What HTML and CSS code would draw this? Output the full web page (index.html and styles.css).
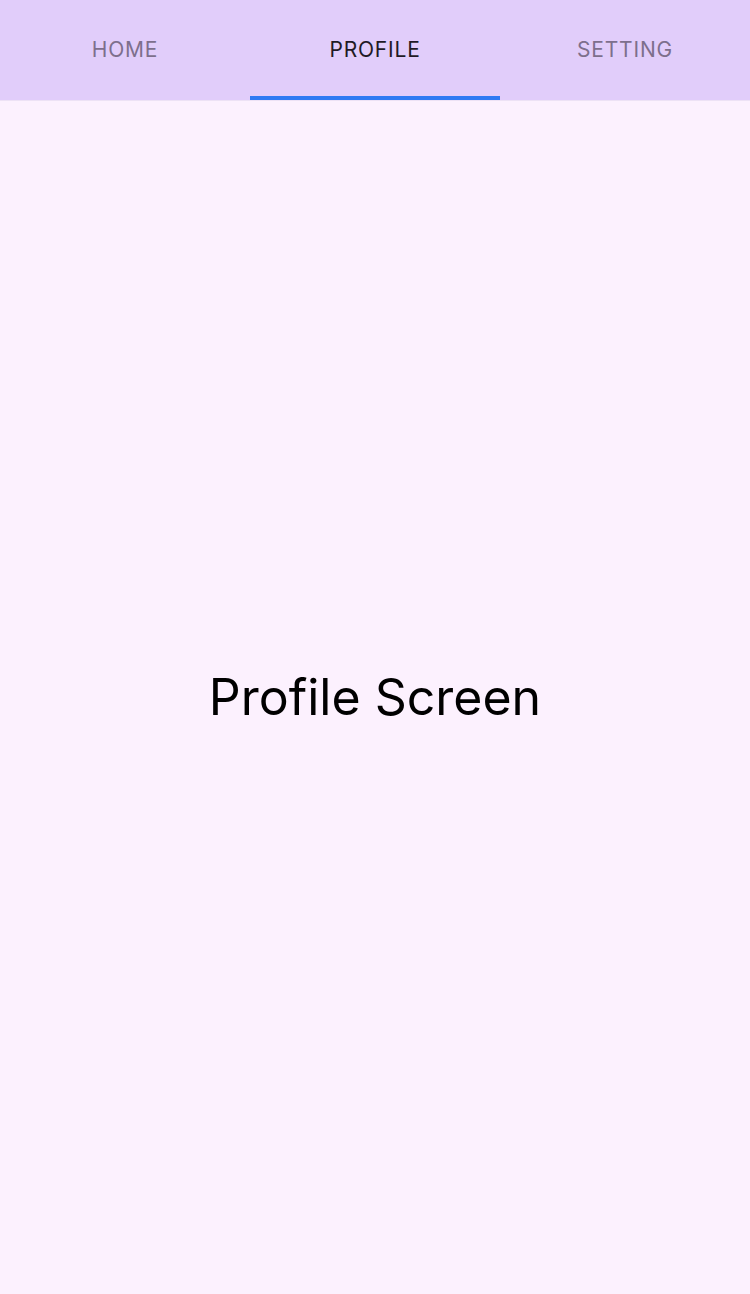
FILE: index.html
```html
<!DOCTYPE html>
<html>
<head>
<meta charset="utf-8">
<link rel="stylesheet" href="styles.css">
</head>
<body>
<div class="app">
  <nav class="tabs">
    <div class="tab">HOME</div>
    <div class="tab active">PROFILE</div>
    <div class="tab">SETTING</div>
  </nav>
  <main class="screen">
    <div class="title">Profile Screen</div>
  </main>
</div>
</body>
</html>
```
FILE: styles.css
```css
html, body {
  margin: 0;
  padding: 0;
  height: 100%;
}
body {
  font-family: Inter, Roboto, "Liberation Sans", sans-serif;
  background: #fcf1fe;
}
.app {
  display: flex;
  flex-direction: column;
  height: 100%;
}
.tabs {
  display: flex;
  height: 100px;
  flex-shrink: 0;
  background: #e1cdfa;
  box-shadow: 0 1px 0 #ede2f5;
  position: relative;
  z-index: 1;
}
.tab {
  flex: 1;
  display: flex;
  align-items: center;
  justify-content: center;
  font-size: 21px;
  letter-spacing: 0.8px;
  color: #7d6f8c;
  box-sizing: border-box;
  padding-bottom: 1px;
}
.tab.active {
  color: #1f1a25;
  border-bottom: 4px solid #2f7af3;
  padding-bottom: 0;
  padding-top: 3px;
}
.screen {
  flex: 1;
  display: flex;
  align-items: center;
  justify-content: center;
}
.title {
  font-size: 50px;
  color: #000;
}
```
